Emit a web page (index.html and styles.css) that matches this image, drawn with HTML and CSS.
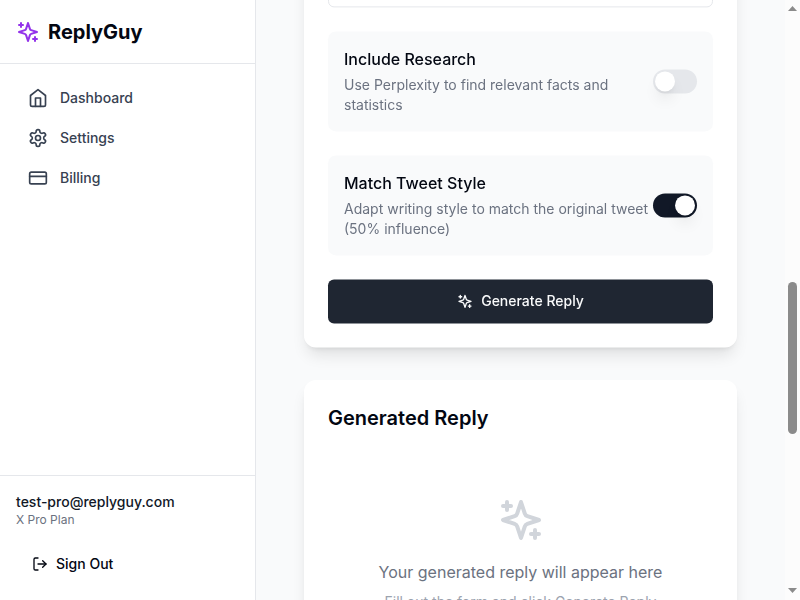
FILE: index.html
```html
<!DOCTYPE html>
<html lang="en">
<head>
<meta charset="utf-8">
<title>ReplyGuy</title>
<link rel="stylesheet" href="styles.css">
</head>
<body>
<svg class="defs" aria-hidden="true">
  <symbol id="sparkles" viewBox="0 0 24 24"><path d="m12 3-1.912 5.813a2 2 0 0 1-1.275 1.275L3 12l5.813 1.912a2 2 0 0 1 1.275 1.275L12 21l1.912-5.813a2 2 0 0 1 1.275-1.275L21 12l-5.813-1.912a2 2 0 0 1-1.275-1.275L12 3Z"/><path d="M5 3v4"/><path d="M19 17v4"/><path d="M3 5h4"/><path d="M17 19h4"/></symbol>
</svg>
<div class="app">
  <aside class="sidebar">
    <div class="brand">
      <svg class="icon brand-icon"><use href="#sparkles"/></svg>
      <span>ReplyGuy</span>
    </div>
    <nav class="nav">
      <a class="nav-item"><svg class="icon nav-icon" viewBox="0 0 24 24"><path d="m3 9 9-7 9 7v11a2 2 0 0 1-2 2H5a2 2 0 0 1-2-2z"/><polyline points="9 22 9 12 15 12 15 22"/></svg>Dashboard</a>
      <a class="nav-item"><svg class="icon nav-icon" viewBox="0 0 24 24"><path d="M12.22 2h-.44a2 2 0 0 0-2 2v.18a2 2 0 0 1-1 1.73l-.43.25a2 2 0 0 1-2 0l-.15-.08a2 2 0 0 0-2.73.73l-.22.38a2 2 0 0 0 .73 2.73l.15.1a2 2 0 0 1 1 1.72v.51a2 2 0 0 1-1 1.74l-.15.09a2 2 0 0 0-.73 2.73l.22.38a2 2 0 0 0 2.73.73l.15-.08a2 2 0 0 1 2 0l.43.25a2 2 0 0 1 1 1.73V20a2 2 0 0 0 2 2h.44a2 2 0 0 0 2-2v-.18a2 2 0 0 1 1-1.73l.43-.25a2 2 0 0 1 2 0l.15.08a2 2 0 0 0 2.73-.73l.22-.39a2 2 0 0 0-.73-2.73l-.15-.08a2 2 0 0 1-1-1.74v-.5a2 2 0 0 1 1-1.74l.15-.09a2 2 0 0 0 .73-2.73l-.22-.38a2 2 0 0 0-2.73-.73l-.15.08a2 2 0 0 1-2 0l-.43-.25a2 2 0 0 1-1-1.73V4a2 2 0 0 0-2-2z"/><circle cx="12" cy="12" r="3"/></svg>Settings</a>
      <a class="nav-item"><svg class="icon nav-icon" viewBox="0 0 24 24"><rect width="20" height="14" x="2" y="5" rx="2"/><line x1="2" x2="22" y1="10" y2="10"/></svg>Billing</a>
    </nav>
    <div class="account">
      <p class="email">test-pro@replyguy.com</p>
      <p class="plan">X Pro Plan</p>
      <button class="sign-out"><svg class="icon small-icon" viewBox="0 0 24 24"><path d="M9 21H5a2 2 0 0 1-2-2V5a2 2 0 0 1 2-2h4"/><polyline points="16 17 21 12 16 7"/><line x1="21" x2="9" y1="12" y2="12"/></svg>Sign Out</button>
    </div>
  </aside>
  <main class="main">
    <section class="card form-card">
      <div class="field"></div>
      <div class="option">
        <div>
          <h3 class="option-title">Include Research</h3>
          <p class="option-text">Use Perplexity to find relevant facts and statistics</p>
        </div>
        <button class="switch" role="switch" aria-checked="false"><span class="thumb"></span></button>
      </div>
      <div class="option">
        <div>
          <h3 class="option-title">Match Tweet Style</h3>
          <p class="option-text">Adapt writing style to match the original tweet (50% influence)</p>
        </div>
        <button class="switch on" role="switch" aria-checked="true"><span class="thumb"></span></button>
      </div>
      <button class="generate"><svg class="icon small-icon"><use href="#sparkles"/></svg>Generate Reply</button>
    </section>
    <section class="card reply-card">
      <h2 class="reply-title">Generated Reply</h2>
      <div class="empty">
        <svg class="icon empty-icon"><use href="#sparkles"/></svg>
        <p class="empty-title">Your generated reply will appear here</p>
        <p class="empty-text">Fill out the form and click Generate Reply</p>
      </div>
    </section>
  </main>
  <div class="scrollbar">
    <span class="arrow up"></span>
    <span class="bar"></span>
    <span class="arrow down"></span>
  </div>
</div>
</body>
</html>
```
FILE: styles.css
```css
* { box-sizing: border-box; margin: 0; padding: 0; }

body {
  height: 600px;
  overflow: hidden;
  font-family: Inter, "Liberation Sans", sans-serif;
  color: #030712;
  background: #f9fafb;
}

button { font: inherit; border: 0; }

.defs { display: none; }

.icon {
  flex: none;
  fill: none;
  stroke: currentColor;
  stroke-width: 2;
  stroke-linecap: round;
  stroke-linejoin: round;
}

.small-icon { width: 16px; height: 16px; }

.app { display: flex; height: 600px; overflow: hidden; }

.sidebar {
  display: flex;
  flex-direction: column;
  flex: none;
  width: 256px;
  background: #fff;
  border-right: 1px solid #e5e7eb;
}

.brand {
  display: flex;
  align-items: center;
  gap: 8px;
  height: 64px;
  padding: 0 16px;
  border-bottom: 1px solid #e5e7eb;
  font-size: 20px;
  line-height: 28px;
  font-weight: 700;
}

.brand-icon { width: 24px; height: 24px; color: #9333ea; }

.nav {
  display: flex;
  flex: 1;
  flex-direction: column;
  gap: 4px;
  padding: 16px;
}

.nav-item {
  display: flex;
  align-items: center;
  gap: 12px;
  padding: 8px 12px;
  font-size: 14px;
  line-height: 20px;
  font-weight: 500;
  color: #374151;
}

.nav-icon { width: 20px; height: 20px; }

.account { padding: 16px; border-top: 1px solid #e5e7eb; }

.email { font-size: 14px; line-height: 20px; font-weight: 500; color: #111827; }

.plan { margin-bottom: 16px; font-size: 12px; line-height: 16px; color: #6b7280; }

.sign-out {
  display: flex;
  align-items: center;
  gap: 8px;
  width: 100%;
  height: 40px;
  padding: 0 16px;
  background: none;
  color: #030712;
  font-size: 14px;
  line-height: 20px;
  font-weight: 500;
}

.main {
  display: flex;
  flex: 1;
  flex-direction: column;
  gap: 33px;
  min-width: 0;
  padding: 0 48px;
  overflow: hidden;
}

.card {
  flex: none;
  padding: 24px;
  background: #fff;
  border-radius: 12px;
  box-shadow: 0 10px 15px -3px rgb(0 0 0 / 0.1), 0 4px 6px -4px rgb(0 0 0 / 0.1);
}

.form-card {
  display: flex;
  flex-direction: column;
  gap: 24px;
  margin-top: -57px;
  transform: translateY(0.4px);
  will-change: transform;
}

.field { height: 40px; border: 1px solid #e5e7eb; border-radius: 6px; }

.option {
  display: flex;
  align-items: center;
  justify-content: space-between;
  padding: 16px;
  background: #f9fafb;
  border-radius: 8px;
}

.option-title { margin-bottom: 4px; font-size: 16px; line-height: 24px; font-weight: 500; }

.option-text { font-size: 14px; line-height: 20px; color: #6b7280; }

.switch {
  display: flex;
  flex: none;
  width: 44px;
  height: 24px;
  padding: 2px;
  border-radius: 12px;
  background: #e5e7eb;
}

.switch.on { justify-content: flex-end; background: #111827; }

.thumb {
  width: 20px;
  height: 20px;
  border-radius: 50%;
  background: #fff;
  box-shadow: 0 10px 15px -3px rgb(0 0 0 / 0.1), 0 4px 6px -4px rgb(0 0 0 / 0.1);
}

.generate {
  display: flex;
  align-items: center;
  justify-content: center;
  gap: 8px;
  height: 44px;
  border-radius: 6px;
  background: #1f2632;
  color: #f9fafb;
  font-size: 14px;
  line-height: 20px;
  font-weight: 500;
}

.reply-card { height: 400px; }

.reply-title { margin-bottom: 16px; font-size: 20px; line-height: 28px; font-weight: 600; }

.empty {
  display: flex;
  flex-direction: column;
  align-items: center;
  padding-top: 48px;
  text-align: center;
}

.empty-icon { width: 48px; height: 48px; margin-bottom: 16px; color: #d1d5db; }

.empty-title { margin-bottom: 8px; font-size: 16px; line-height: 24px; color: #6b7280; }

.empty-text { font-size: 14px; line-height: 20px; color: #9ca3af; }

.scrollbar {
  display: flex;
  flex: none;
  flex-direction: column;
  align-items: center;
  width: 15px;
  padding: 6px 0 7px;
  background: #fcfcfc;
}

.bar {
  width: 9px;
  height: 152px;
  margin: 271px 0 auto;
  border-radius: 5px;
  background: #8b8b8b;
}

.arrow {
  width: 9px;
  height: 5px;
  background: #8b8b8b;
}

.up { clip-path: polygon(50% 0, 100% 100%, 0 100%); }

.down { clip-path: polygon(0 0, 100% 0, 50% 100%); }
```
